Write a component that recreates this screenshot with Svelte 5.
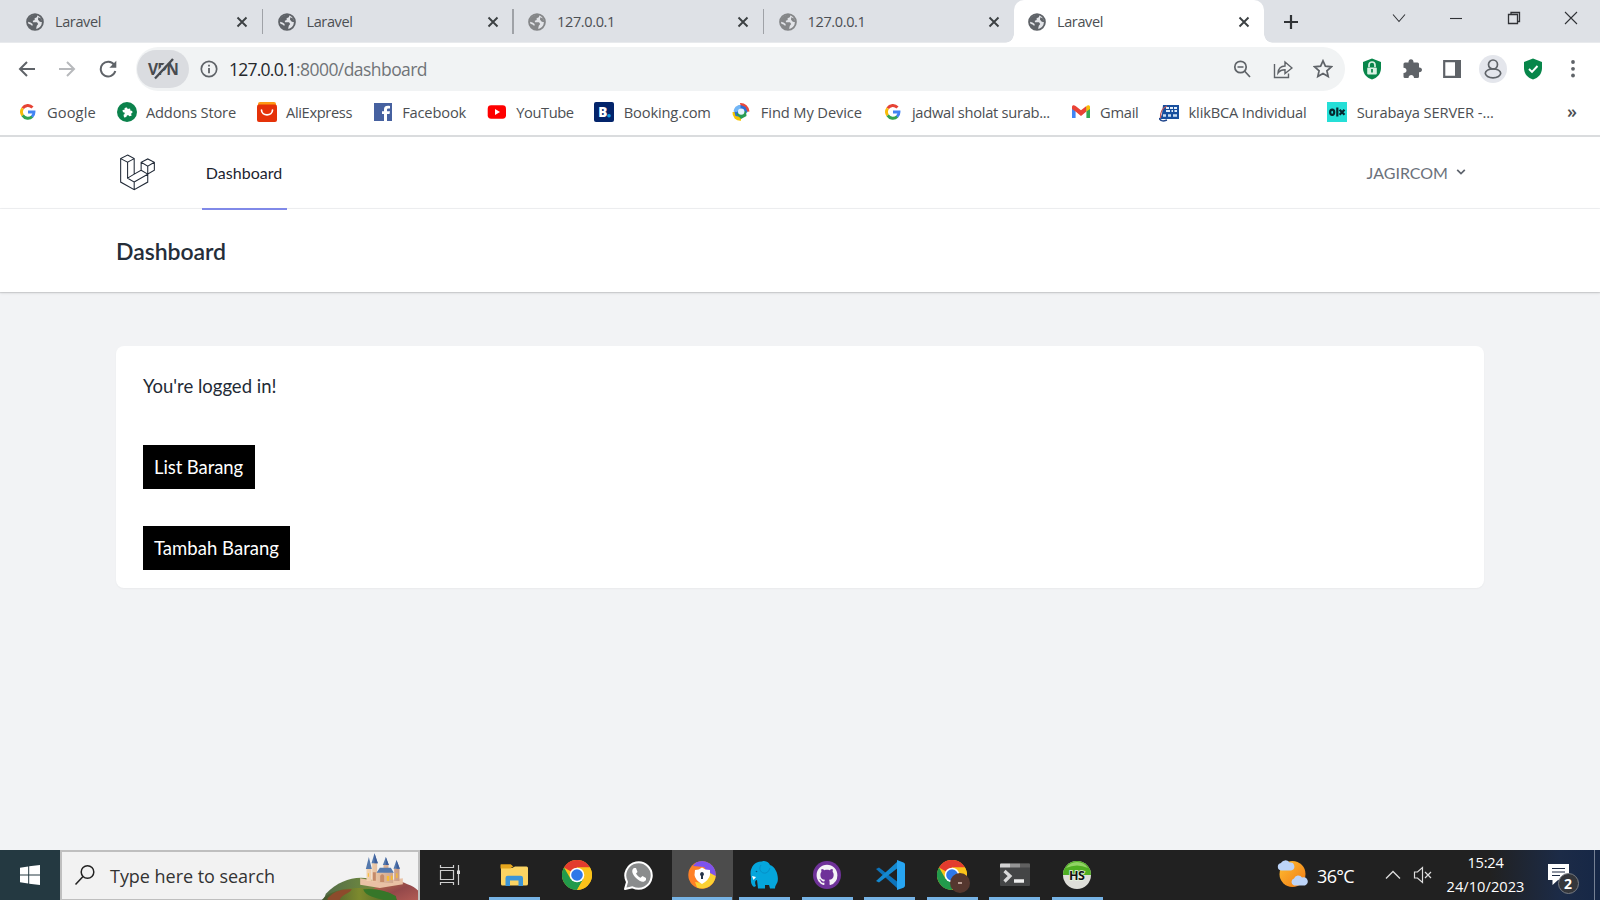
<script>
  const tabs = [
    { title: 'Laravel', w: 46 },
    { title: 'Laravel', w: 46 },
    { title: '127.0.0.1', w: 58, dim: true },
    { title: '127.0.0.1', w: 58, dim: true },
    { title: 'Laravel', w: 46, active: true }
  ];

  const bookmarks = [
    { icon: 'google', label: 'Google', w: 49 },
    { icon: 'addons', label: 'Addons Store', w: 90 },
    { icon: 'ali', label: 'AliExpress', w: 66 },
    { icon: 'facebook', label: 'Facebook', w: 64 },
    { icon: 'youtube', label: 'YouTube', w: 57.5 },
    { icon: 'booking', label: 'Booking.com', w: 87 },
    { icon: 'device', label: 'Find My Device', w: 101 },
    { icon: 'google', label: 'jadwal sholat surab...', w: 138 },
    { icon: 'gmail', label: 'Gmail', w: 38.5 },
    { icon: 'bca', label: 'klikBCA Individual', w: 118 },
    { icon: 'olx', label: 'Surabaya SERVER -...', w: 137 }
  ];

  const apps = [
    { icon: 'explorer', open: true },
    { icon: 'chrome' },
    { icon: 'whatsapp' },
    { icon: 'secure', open: true, current: true },
    { icon: 'mamp', open: true },
    { icon: 'github', open: true },
    { icon: 'vscode', open: true },
    { icon: 'chromeProfile', open: true },
    { icon: 'terminal', open: true },
    { icon: 'hs', open: true }
  ];

  // Adjusts tracking so that a label takes up the given width.
  function fit(node, width) {
    node.style.letterSpacing = '0px';
    const natural = node.getBoundingClientRect().width;
    node.style.letterSpacing = (width - natural) / node.textContent.length + 'px';
  }
</script>

{#snippet globe()}
  <svg class="globe" viewBox="0 0 18 18" width="18" height="18">
    <circle cx="9" cy="9" r="7.9" fill="#e2e4e8" stroke="currentColor" stroke-width="1.9" />
    <path d="M2 6.5C3.500 2.500 8 1 11.500 2.200L10.800 4.300 8.600 5.200 8.700 7 6.800 7.700 7 9.300H11L12.200 11 10.800 12.800 10 16.200C5.500 17.200 2 14 1.500 10.500L4.500 11.400 6.300 13.100 6.700 11 4.500 9.500 2 8.800Z" fill="currentColor" />
    <path d="M12.300 4.200L15.200 5.500 16.500 9.200 13.800 8.800 12 6.800Z" fill="currentColor" />
  </svg>
{/snippet}

{#snippet chromeArt()}
  <circle cx="15" cy="15" r="15" fill="#fbc21a" />
  <path d="M15 15L2 7.500A15 15 0 0 1 28 7.500H15Z" fill="#e33b2e" />
  <path d="M2 7.500A15 15 0 0 0 15 30L21.500 18.700 8.500 18.700Z" fill="#229a4b" />
  <path d="M15 7.500H28A15 15 0 0 1 15 30L21.500 18.700Z" fill="#fbc21a" />
  <circle cx="15" cy="15" r="7.300" fill="#fff" />
  <circle cx="15" cy="15" r="5.800" fill="#2f78e8" />
{/snippet}

{#snippet bookmarkIcon(name)}
  <svg viewBox="0 0 20 20" width="20" height="20">
    {#if name === 'google'}
      <g fill="none" stroke-width="2.900">
        <path d="M4.700 6.300A6.200 6.200 0 0 1 14.500 5.500" stroke="#e64335" />
        <path d="M4.700 13.400A6.200 6.200 0 0 1 4.700 6.300" stroke="#f8bb09" />
        <path d="M14.300 14.400A6.200 6.200 0 0 1 4.700 13.400" stroke="#34a350" />
        <path d="M10 10H16A6.200 6.200 0 0 1 14 14.600" stroke="#4284f3" />
      </g>
    {:else if name === 'addons'}
      <circle cx="10" cy="10" r="10" fill="#0b824c" />
      <path d="M6 7.200H8.200C7.600 5 11.600 4.700 11.200 7.200H13.700V9.600C16 9.300 16 12.400 13.700 12.200V14.700H11.300C11.500 12.800 8.300 12.800 8.500 14.700H6V12C8 12.100 8 9.400 6 9.600Z" fill="#fff" transform="rotate(-12 10 10)" />
    {:else if name === 'ali'}
      <path d="M1 2Q1 0 3 0H17Q19 0 19 2V6H1Z" fill="#ff9914" />
      <rect y="2.500" width="20" height="17.500" rx="2" fill="#e53209" />
      <path d="M4.500 8C4.500 14.500 15.500 14.500 15.500 8" fill="none" stroke="#fff" stroke-width="1.700" stroke-linecap="round" />
    {:else if name === 'facebook'}
      <rect x="1" y="1" width="18" height="18" fill="#4661a0" />
      <path d="M11 19V12H9V9.300H11V7.300C11 4.500 13 3.400 17 4V6.500C14.800 6.200 14 6.500 14 8V9.300H17L16.500 12H14V19Z" fill="#fff" />
    {:else if name === 'youtube'}
      <rect x=".7" y="3.300" width="18.300" height="13.400" rx="3.400" fill="#fe0000" />
      <path d="M8 7L13 10 8 13Z" fill="#fff" />
    {:else if name === 'booking'}
      <rect width="20" height="20" rx="2" fill="#03246b" />
      <text x="4.200" y="15" font-family="Open Sans, sans-serif" font-size="13.500" font-weight="800" fill="#fff">B</text>
      <circle cx="15" cy="13.700" r="1.800" fill="#16a0e8" />
    {:else if name === 'device'}
      <path d="M9 1A9 9 0 0 1 18.500 9.500L14 10A4.500 4.500 0 0 0 10 5.500Z" fill="#e8483b" />
      <path d="M10 18.800A8 8 0 0 1 1.500 10H6L10 14Z" fill="#f5c500" />
      <path d="M3.500 10A7 7 0 0 1 9.500 3L14.500 5 16.500 10 10 15 4.500 14Z" fill="#2c6fd6" />
      <path d="M2.500 9.500A8 8 0 0 1 9.500 2.700V7L6 10Z" fill="#72b6f6" />
      <path d="M5 11.500L10 17 15.500 14 15 9Z" fill="#2a9b53" />
      <circle cx="10.200" cy="9.600" r="3.200" fill="#e7f3fd" />
    {:else if name === 'gmail'}
      <path d="M2.800 5V16" stroke="#4285f4" stroke-width="3.600" />
      <path d="M17.200 5V16" stroke="#34a853" stroke-width="3.600" />
      <path d="M1 6.500V5C1 3 3 2.600 4.600 4L10 8.200 15.400 4V9.600L10 14 4.600 9.600 1 7Z" fill="#ea4335" />
      <path d="M15.400 4C17 2.600 19 3 19 5V7L15.400 9.600Z" fill="#fbbc04" />
    {:else if name === 'bca'}
      <path d="M4 3H20V17H1L3 12Z" fill="#174f9e" />
      <path d="M7 6H10M11 6H14M15 6H18M7 9H11M12.500 9H14M15.500 9H18" stroke="#e4effa" stroke-width="2" />
      <path d="M4 13.500H7M9 13.500H12M14 13.500H18" stroke="#cbdff2" stroke-width="2.400" />
      <path d="M8 4Q1 7 1.500 16" fill="none" stroke="#c25757" stroke-width="1.200" />
      <path d="M0 16C2 20 5 19 8 18" fill="none" stroke="#20468c" stroke-width="1.500" />
    {:else if name === 'olx'}
      <rect width="20" height="20" fill="#25dfd7" />
      <ellipse cx="5.200" cy="10.300" rx="2" ry="2.600" fill="none" stroke="#07282f" stroke-width="2.200" />
      <path d="M10.300 5.500V14.500M12.600 7.800L17.500 12.800M17.500 7.800L12.600 12.800" stroke="#07282f" stroke-width="2.200" />
    {/if}
  </svg>
{/snippet}

{#snippet appIcon(name)}
  <svg viewBox="0 0 30 30" width="30" height="30">
    {#if name === 'explorer'}
      <path d="M2 4.500H12L14.500 7H2Z" fill="#d99a13" />
      <path d="M2 8H13L16 6.500H27.500Q29 6.500 29 8V24Q29 25.500 27 25.500H3.500Q2 25.500 2 24Z" fill="#fcd462" />
      <path d="M1.500 4.500H11.500L13.500 6 12 8.500H1.500Z" fill="#e5a51d" />
      <path d="M6.500 26V18Q6.500 15.800 8.700 15.800H21.500Q24 15.800 24 18V26H19.500V20.500H11V26Z" fill="#3c95d8" />
    {:else if name === 'chrome'}
      {@render chromeArt()}
    {:else if name === 'whatsapp'}
      <path d="M1 29L3 22A13.200 13.200 0 1 1 8.500 27.300Z" fill="#8a8c8d" stroke="#fff" stroke-width="2" stroke-linejoin="round" />
      <path d="M10 8C7 10 8 14 12 18S20 23 22 20V18L18.500 16 16.500 17.700C14.500 17 13 15.300 12 13.500L13.500 12 12 8Z" fill="#fff" />
    {:else if name === 'secure'}
      <circle cx="15" cy="15" r="13.700" fill="#ff8127" />
      <path d="M9 2.500A13.700 13.700 0 0 1 28.500 17L22 15 17 7 6 6Z" fill="#7e53ed" />
      <path d="M28.700 16A13.700 13.700 0 0 1 10 27.500L8 22 16 23 23 13Z" fill="#fbd132" />
      <path d="M8 10Q12 10 15 7.500Q18 10 23 10V15Q22 20 15 24Q8 20 7.500 15Z" fill="#fff" />
      <path d="M15 12A2.200 2.200 0 0 1 16 16V19H14V16A2.200 2.200 0 0 1 15 12Z" fill="#253449" />
    {:else if name === 'mamp'}
      <path d="M2 17C0 9 5 1 13 1.500C17 0 20 3 21 5C27 7 30 16 28.500 22C27 25 26 26 26 28.500H21L20 25H16V28.500H9L8 20C6 20 5.500 23 7 26L5 27C1 24 2 20 2 17Z" fill="#05a6dc" />
      <path d="M12 5C9 9 12 14 17 13Q20 12 21 8" fill="none" stroke="#0590c8" stroke-width="1" />
      <path d="M3 16L7 17 4.500 20Z" fill="#fff" />
      <circle cx="7.500" cy="11.500" r=".8" fill="#07577f" />
    {:else if name === 'github'}
      <circle cx="15" cy="15" r="14" fill="#6f3299" />
      <path fill="#f5f3f7" transform="translate(4.600 4.800) scale(1.300)" d="M8 0C3.580 0 0 3.580 0 8c0 3.540 2.290 6.530 5.470 7.590.4.070.55-.17.55-.38 0-.19-.01-.82-.01-1.490-2.010.37-2.530-.49-2.690-.94-.09-.23-.48-.94-.82-1.130-.28-.15-.68-.52-.01-.53.63-.01 1.080.58 1.230.82.72 1.210 1.870.87 2.330.66.07-.52.28-.87.51-1.070-1.780-.2-3.640-.89-3.640-3.950 0-.87.31-1.590.82-2.150-.08-.2-.36-1.020.08-2.120 0 0 .67-.21 2.200.82.64-.18 1.320-.27 2-.27s1.360.09 2 .27c1.530-1.040 2.200-.82 2.200-.82.44 1.100.16 1.920.08 2.120.51.56.82 1.270.82 2.150 0 3.070-1.870 3.750-3.650 3.950.29.25.54.73.54 1.480 0 1.070-.01 1.930-.01 2.200 0 .21.15.46.55.38A8.010 8.010 0 0 0 16 8c0-4.420-3.580-8-8-8Z" />
    {:else if name === 'vscode'}
      <path d="M1 9L4 7.500 24 23V29L22 28Z" fill="#0d73ba" />
      <path d="M1 21L4 22.500 24 7V1L22 2Z" fill="#1489d0" />
      <path d="M22 0L28.500 2.500Q30 3 30 4.500V25.500Q30 27 28.500 27.700L22 30Z" fill="#27a5f2" />
    {:else if name === 'chromeProfile'}
      {@render chromeArt()}
    {:else if name === 'terminal'}
      <rect y="3.500" width="30" height="22.500" rx="1" fill="#444546" />
      <path d="M0 7.500V4.500Q0 3.500 1 3.500H10V7.500Z" fill="#d3d3d3" />
      <path d="M10 3.500H20V7.500H10Z" fill="#949494" />
      <path d="M20 3.500H29Q30 3.500 30 4.500V7.500H20Z" fill="#606060" />
      <path d="M4.500 11L10 16 4.500 21.500" fill="none" stroke="#d9d9d9" stroke-width="3.200" />
      <path d="M14 21H24" stroke="#eee" stroke-width="3.500" />
    {:else if name === 'hs'}
      <circle cx="15" cy="15" r="14" fill="#deded9" />
      <path d="M1 15A14 14 0 0 1 29 15Z" fill="#4faf22" />
      <path d="M4 8A13 13 0 0 1 26 8Q15 3 4 8Z" fill="#91d365" />
      <text x="7" y="19.500" font-family="Open Sans, sans-serif" font-size="12.500" font-weight="700" textLength="16" fill="#111" stroke="#e8f3e0" stroke-width="1.500" paint-order="stroke">HS</text>
    {/if}
  </svg>
{/snippet}

<div class="screen">
  <header class="tabstrip">
    <div class="tabs">
      {#each tabs as tab}
        <div class="tab" class:active={tab.active} class:dim={tab.dim}>
          {@render globe()}
          <span class="title"><span use:fit={tab.w}>{tab.title}</span></span>
          <svg class="x" viewBox="0 0 12 12" width="12" height="12"><path d="M1.500 1.500L10.500 10.500M10.500 1.500L1.500 10.500" stroke="#3c4043" stroke-width="1.900" /></svg>
        </div>
      {/each}
    </div>
    <svg class="plus" viewBox="0 0 16 16" width="16" height="16"><path d="M8 1V15M1 8H15" stroke="#303336" stroke-width="2.200" /></svg>
    <div class="window-controls">
      <svg viewBox="0 0 16 16" width="16" height="16"><path d="M2 4.500L8 11.500 14 4.500" /></svg>
      <svg viewBox="0 0 16 16" width="16" height="16"><path d="M2 8.500H14" /></svg>
      <svg viewBox="0 0 16 16" width="16" height="16"><path d="M2.500 4.500H11.500V13.500H2.500ZM5 4V2.500H13.500V11.500H12" stroke-width="1.300" /></svg>
      <svg viewBox="0 0 16 16" width="16" height="16"><path d="M2 2L14 14M14 2L2 14" /></svg>
    </div>
  </header>

  <div class="toolbar">
    <div class="nav-buttons">
      <svg viewBox="0 0 18 18" width="18" height="18"><path d="M17 9H2M9 2L2 9 9 16" /></svg>
      <svg class="disabled" viewBox="0 0 18 18" width="18" height="18"><path d="M1 9H16M9 2L16 9 9 16" /></svg>
      <svg viewBox="0 0 18 18" width="18" height="18"><path d="M15.200 4.800A7.400 7.400 0 1 0 16.300 11" /><path d="M17.300 .8V7.700H10.400Z" fill="#5f6368" stroke="none" /></svg>
    </div>
    <div class="omnibox">
      <div class="vpn">
        <span use:fit={30}>VPN</span>
        <svg viewBox="0 0 52 39" width="52" height="39"><path d="M16.500 27L34.500 7.500" stroke="#dadce0" stroke-width="2.500" /><path d="M18 28.500L36 9" stroke="#484b50" stroke-width="2.300" /></svg>
      </div>
      <svg class="info" viewBox="0 0 18 18" width="18" height="18"><circle cx="9" cy="9" r="7.700" fill="none" stroke="#5f6368" stroke-width="1.700" /><path d="M9 8V13.200M9 4.700V6.500" stroke="#5f6368" stroke-width="1.800" /></svg>
      <div class="url"><span class="host" use:fit={67}>127.0.0.1</span><span use:fit={131}>:8000/dashboard</span></div>
      <div class="omni-icons">
        <svg viewBox="0 0 20 20" width="20" height="20"><circle cx="8.500" cy="8" r="5.700" /><path d="M12.700 12.200L18 18M5.500 8H11.500" /></svg>
        <svg viewBox="0 0 20 20" width="20" height="20"><path d="M1.500 5V18.500H15.500V14.500M5 14C5.500 9 8 7 12 7V3L19 9 12 14.500V10.800C8.500 10.800 6.500 12 5 14Z" stroke-width="1.400" /></svg>
        <svg viewBox="0 0 20 20" width="20" height="20"><path d="M10 1.800L12.400 7.200 18.300 7.800 13.900 11.800 15.200 17.600 10 14.500 4.800 17.600 6.100 11.800 1.700 7.800 7.600 7.200Z" /></svg>
      </div>
    </div>
    <div class="extensions">
      <svg viewBox="0 0 24 24" width="24" height="24"><path d="M12 1.500L21 5V11C21 17 17 21 12 22.500C7 21 3 17 3 11V5Z" fill="#07864a" /><rect x="7.200" y="10.500" width="9.600" height="7" rx="1" fill="#d8f1e2" /><path d="M9 10V8A3 3 0 0 1 15 8V10" fill="none" stroke="#d8f1e2" stroke-width="1.700" /><path d="M12 12V15.500" stroke="#07864a" stroke-width="1.700" /></svg>
      <svg viewBox="0 0 24 24" width="24" height="24"><path d="M3.500 7Q3.500 5.500 5 5.500H8.500C8 1 14 1 13.500 5.500H17.500Q19 5.500 19 7V10.500C23 10.200 23 15.500 19 15.200V19.500Q19 21 17.500 21H14C14 17 8.500 17 8.500 21H5Q3.500 21 3.500 19.500V16C7.500 16 7.500 10.800 3.500 10.700Z" fill="#5f6368" /></svg>
      <svg viewBox="0 0 24 24" width="24" height="24"><path d="M4.200 4.200H19.800V19.800H4.200Z" fill="#fff" stroke="#5f6368" stroke-width="2.200" /><path d="M15 3H21V21H15Z" fill="#5f6368" /></svg>
      <div class="avatar"><svg viewBox="0 0 20 20" width="20" height="20"><circle cx="10" cy="5.500" r="4.500" /><ellipse cx="10" cy="14.300" rx="7.700" ry="4.500" /></svg></div>
      <svg viewBox="0 0 24 24" width="24" height="24"><path d="M12 1.500L21 5V11C21 17 17 21 12 22.500C7 21 3 17 3 11V5Z" fill="#07864a" /><path d="M8 12L11 15 16.500 9" fill="none" stroke="#fff" stroke-width="1.900" /></svg>
      <svg viewBox="0 0 24 24" width="24" height="24"><g fill="#5f6368"><circle cx="12" cy="5" r="1.900" /><circle cx="12" cy="11.800" r="1.900" /><circle cx="12" cy="18.500" r="1.900" /></g></svg>
    </div>
  </div>

  <nav class="bookmarks">
    {#each bookmarks as b}
      <div class="bookmark">
        {@render bookmarkIcon(b.icon)}
        <span class="label" style="width: {b.w}px"><span use:fit={b.w}>{b.label}</span></span>
      </div>
    {/each}
    <span class="more">»</span>
  </nav>

  <div class="page">
    <div class="app-nav">
      <div class="container">
        <svg class="logo" viewBox="88 72 110 112" width="37" height="37"><path d="M113 75L133 86V133L154 121V97L174 87 194 97V121L174 133V157L133 180 92 157V86ZM92 86L113 97 133 86M113 97V145L133 157V180M113 145L133 133M154 121L174 133 133 157M154 97L174 109 194 97M174 109V133" /></svg>
        <a class="nav-link" href="#dashboard"><span use:fit={76.500}>Dashboard</span></a>
        <div class="user"><span use:fit={81.500}>JAGIRCOM</span><svg viewBox="0 0 10 8" width="10" height="8"><path d="M1.200 1.800L5 5.600 8.800 1.800" /></svg></div>
      </div>
    </div>
    <div class="page-header"><h2><span use:fit={110}>Dashboard</span></h2></div>
    <main>
      <section class="card">
        <p><span use:fit={133.500}>You're logged in!</span></p>
        <button class="list"><span use:fit={89}>List Barang</span></button>
        <button class="add"><span use:fit={125}>Tambah Barang</span></button>
      </section>
    </main>
  </div>

  <footer class="taskbar">
    <div class="start"><svg viewBox="0 0 20 20" width="20" height="20"><path d="M0 2.700L8.200 1.500V9.500H0ZM9.200 1.300L20 0V9.500H9.200ZM0 10.500H8.200V18.500L0 17.300ZM9.200 10.500H20V20L9.200 18.700Z" fill="#fff" /></svg></div>
    <div class="search">
      <svg class="lens" viewBox="0 0 22 22" width="22" height="22"><circle cx="13.500" cy="8" r="6.300" /><path d="M9 12.500L1.500 20.500" /></svg>
      <span class="label"><span use:fit={165}>Type here to search</span></span>
      <svg class="castle" viewBox="966 33 290 144" width="97" height="48">
        <defs>
          <linearGradient id="hillA" x1="0" x2="1"><stop offset="0" stop-color="#526b48" /><stop offset=".6" stop-color="#6b8540" /><stop offset="1" stop-color="#7d8046" /></linearGradient>
          <linearGradient id="hillB" x1="0" x2="1" y2="1"><stop offset="0" stop-color="#bc7149" /><stop offset=".5" stop-color="#93484a" /><stop offset="1" stop-color="#b45c55" /></linearGradient>
          <linearGradient id="hillC"><stop offset="0" stop-color="#40532f" /><stop offset=".5" stop-color="#7d8a2e" /><stop offset="1" stop-color="#475f25" /></linearGradient>
          <linearGradient id="wall"><stop offset="0" stop-color="#f4d4b1" /><stop offset="1" stop-color="#c99b85" /></linearGradient>
        </defs>
        <path d="M980 158C1020 119 1060 105 1110 112L1170 150 1100 180H972Z" fill="url(#hillA)" />
        <path d="M1120 145C1160 120 1190 112 1225 130Q1250 139 1260 153V180H1120Z" fill="url(#hillB)" />
        <path d="M966 180C990 140 1090 130 1165 154Q1190 164 1194 180Z" fill="url(#hillC)" />
        <path d="M985 172Q1010 142 1058 145C1050 160 1028 158 1020 180H986Z" fill="#8d4b2c" />
        <path d="M1092 145Q1145 140 1190 165L1193 180H1165C1140 172 1101 170 1092 145Z" fill="#367629" />
        <path d="M1083 112L1140 122 1211 112V130L1142 141 1083 131Z" fill="#e9c1a5" />
        <path d="M1102 83H1117V120H1102ZM1119 66H1134V123H1119ZM1134 94H1182V126H1134ZM1153 71H1168V96H1153ZM1185 82H1201V120H1185Z" fill="url(#wall)" />
        <path d="M1100 84L1109 48 1118 84ZM1117 67L1126 37 1136 67ZM1151 72L1160 48 1169 72ZM1183 83L1192 57 1202 83ZM1132 95L1142 80H1175L1184 95Z" fill="#5579ad" />
        <path d="M1126 37L1136 67H1126ZM1160 48L1169 72H1160ZM1192 57L1202 83H1192Z" fill="#3d5e9b" />
        <path d="M1163 105H1170V119H1163ZM1175 104H1180V117H1175ZM1191 97H1195V111H1191ZM1106 97H1109V107H1106Z" fill="#f8bd2f" />
        <path d="M1143 104Q1150 96 1155 104V123H1143ZM1121 94H1130V119H1121Z" fill="#c68b69" />
      </svg>
    </div>
    <div class="taskview"><svg viewBox="0 0 22 20" width="22" height="20"><path d="M1.500 0V2.500H14.500V0M1.500 5.500H14.500V14.500H1.500ZM1.500 20V17.500H14.500V20M19.500 0V20" /><path d="M18 5.500H21V9H18Z" fill="#ddd" stroke="none" /></svg></div>
    <div class="apps">
      {#each apps as app}
        <div class="app" class:open={app.open} class:current={app.current}>
          {@render appIcon(app.icon)}
          {#if app.icon === 'chromeProfile'}<i class="profile"></i>{/if}
        </div>
      {/each}
    </div>
    <div class="tray">
      <svg class="weather" viewBox="0 0 32 30" width="32" height="30">
        <defs><linearGradient id="sun" x1="0" y1="0" x2="1" y2="1"><stop offset="0" stop-color="#ffbf32" /><stop offset="1" stop-color="#f07914" /></linearGradient></defs>
        <circle cx="15.500" cy="15" r="13" fill="url(#sun)" />
        <path d="M4 11.500A3.800 3.800 0 0 1 4 4A5 5 0 0 1 12.500 3.500A4 4 0 0 1 14 11.500ZM17 26.500A3.700 3.700 0 0 1 17 19.500A4.500 4.500 0 0 1 25 18.500A4 4 0 0 1 28 26.500Z" fill="#bcd4f8" />
      </svg>
      <span class="temp"><span use:fit={37}>36°C</span></span>
      <svg class="up" viewBox="0 0 16 10" width="16" height="10"><path d="M1 8.500L8 1.500 15 8.500" /></svg>
      <svg class="sound" viewBox="0 0 20 18" width="20" height="18"><path d="M1.500 6H4.500L9.500 1.500V16.500L4.500 12H1.500ZM12 6L18 12M18 6L12 12" /></svg>
      <div class="clock"><div><span use:fit={36}>15:24</span></div><div><span use:fit={78}>24/10/2023</span></div></div>
      <div class="notify">
        <svg viewBox="0 0 22 22" width="22" height="22"><path d="M0 0H21V16H10L4.500 21V16H0Z" fill="#fff" /><path d="M4 4.500H17M4 8H17M4 11.500H12" stroke="#1c2942" stroke-width="1.200" /></svg>
        <b class="badge">2</b>
      </div>
      <i class="peek"></i>
    </div>
  </footer>
</div>

<style>
  :global(body) { margin: 0; overflow: hidden; }
  .screen { width: 1600px; height: 900px; display: flex; flex-direction: column; overflow: hidden; background: #fff; font-family: 'Open Sans', 'Noto Sans', sans-serif; color: #4c4f53; }
  svg { flex: none; display: block; }
  span { white-space: nowrap; }

  .tabstrip { height: 43px; flex: none; background: #dee1e6; box-shadow: inset 0 -1px #e8eaed; display: flex; align-items: center; box-sizing: border-box; }
  .tabs { display: flex; width: 1264px; height: 43px; padding-left: 11.500px; box-sizing: border-box; }
  .tab { position: relative; width: 250.500px; height: 43px; flex: none; box-sizing: border-box; display: flex; align-items: center; padding: 0 14px 0 14.500px; font-size: 14.500px; }
  .tab:nth-child(n + 2) { padding-left: 15.500px; }
  .tab:nth-child(5) { padding-left: 14.500px; }
  .tab .title { padding-bottom: 1px; }
  .tab:not(.active):not(:nth-child(4))::after { content: ''; position: absolute; right: -1px; top: 9px; width: 1.500px; height: 25px; background: #9fa2a7; }
  .globe { color: #5f6368; }
  .dim .globe { color: #858789; }
  .title { flex: 1; padding-left: 11px; }
  .active { background: #fff; border-radius: 10px 10px 0 0; }
  .active::before, .active::after { content: ''; position: absolute; bottom: 0; width: 9px; height: 9px; }
  .active::before { left: -9px; background: radial-gradient(circle at 0 0, transparent 8.500px, #fff 9px); }
  .active::after { right: -9px; background: radial-gradient(circle at 100% 0, transparent 8.500px, #fff 9px); }
  .plus { margin-left: 19px; }
  .window-controls { margin: 0 21px 7px auto; display: flex; gap: 41.300px; }
  .window-controls svg { fill: none; stroke: #303236; stroke-width: 1.100; }

  .toolbar { height: 49px; flex: none; display: flex; align-items: center; padding-top: 3px; box-sizing: border-box; }
  .nav-buttons { display: flex; gap: 22.300px; width: 136px; padding-left: 18px; box-sizing: border-box; }
  .nav-buttons svg { fill: none; stroke: #5f6368; stroke-width: 2; }
  .nav-buttons .disabled { stroke: #b7b9bc; }
  .omnibox { width: 1209px; height: 44px; border-radius: 22px; background: #f1f3f4; display: flex; align-items: center; }
  .vpn { position: relative; width: 52px; height: 38px; margin-left: 1px; border-radius: 19px; background: #dadce0; display: grid; place-items: center; font-size: 15.500px; font-weight: 700; color: #484b50; }
  .vpn svg { position: absolute; inset: 0; }
  .info { margin-left: 11px; }
  .url { margin-left: 11px; font-size: 17.500px; color: #707478; line-height: 24px; margin-bottom: 1px; }
  .host { color: #25282c; }
  .omni-icons { margin-left: auto; margin-right: 12px; display: flex; gap: 20.500px; }
  .omni-icons svg, .avatar svg { fill: none; stroke: #5f6368; stroke-width: 1.700; }
  .extensions { display: flex; align-items: center; gap: 16.200px; margin-left: 15px; }
  .avatar { width: 28px; height: 28px; margin: 0 -2px; border-radius: 50%; background: #e4e6ec; display: grid; place-items: center; }

  .bookmarks { height: 45px; flex: none; box-sizing: border-box; padding: 0 23px 3px 17.500px; border-bottom: 2px solid #dadcde; display: flex; align-items: center; gap: 20.700px; font-size: 14.700px; }
  .bookmark { display: flex; align-items: center; gap: 9.400px; }
  .bookmark .label { display: block; }
  .more { margin-left: auto; font-size: 18px; font-weight: 600; margin-bottom: 3px; }

  .page { height: 713px; flex: none; background: #f2f3f5; font-family: Lato, sans-serif; }
  .app-nav { height: 72px; box-sizing: border-box; background: #fff; border-bottom: 1px solid #f0f1f3; }
  .container { margin: 0 116px; display: flex; height: 73px; align-items: center; }
  .logo { margin-left: 3px; margin-bottom: 2px; fill: none; stroke: #222b38; stroke-width: 3.200; }
  .nav-link { align-self: stretch; box-sizing: border-box; margin-left: 45.500px; width: 85px; border-bottom: 2px solid #8089e8; padding-bottom: 1px; display: grid; place-items: center; font-size: 16px; color: #1c2430; text-decoration: none; }
  .user { margin: 0 18px 3px auto; display: flex; align-items: center; gap: 8px; font-size: 16px; color: #6b717b; }
  .user svg { fill: none; stroke: #5e646d; stroke-width: 1.700; }
  .page-header { height: 83px; background: #fff; box-shadow: 0 1px 3px #0000001a, 0 1px 1px #0000001a; padding: 0 116px; display: flex; align-items: center; }
  h2 { margin: 0; font-size: 23px; line-height: 28px; font-weight: 600; color: #252e39; }
  main { padding: 54px 116px; }
  .card { height: 242px; box-sizing: border-box; padding: 27px; background: #fff; border-radius: 8px; box-shadow: 0 1px 2px #0000000a; display: flex; flex-direction: column; align-items: flex-start; font-size: 18.500px; color: #222a35; }
  p { margin: 0; line-height: 27px; height: 26px; }
  button { border: 0; padding: 0 0 1px 11px; height: 44px; background: #000; color: #fff; font: inherit; text-align: left; flex: none; }
  .list { width: 112px; margin-top: 46px; }
  .add { width: 147px; margin-top: 37px; }

  .taskbar { height: 50px; flex: none; display: flex; background: linear-gradient(90deg, #212121 0 1490px, #1c2b47 1560px, #162746); color: #fff; }
  .start { width: 60px; height: 50px; background: #243941; display: grid; place-items: center; }
  .search { width: 360px; height: 50px; box-sizing: border-box; border: 2px solid #bfbfbf; border-bottom-width: 1px; background: #f2f2f2; display: flex; align-items: center; color: #333; font-size: 18px; }
  .lens { margin-left: 12px; margin-bottom: 2px; fill: none; stroke: #222; stroke-width: 1.500; }
  .search .label { margin-left: 14px; }
  .castle { margin-left: auto; }
  .taskview { width: 63px; padding-left: 19px; box-sizing: border-box; display: flex; align-items: center; }
  .taskview svg { fill: none; stroke: #cfcfcf; stroke-width: 1.200; }
  .apps { display: flex; }
  .app { width: 62.550px; height: 50px; display: grid; place-items: center; position: relative; }
  .app.current { background: linear-gradient(90deg, transparent 1px, #4c4c4c 1px 62px, transparent 62px); }
  .app.open::after { content: ''; position: absolute; left: 6px; right: 5.500px; bottom: 0; height: 3px; background: #76b3e5; }
  .app.current::after { left: 1px; right: 1px; }
  .profile { position: absolute; left: 29px; top: 23px; width: 20px; height: 20px; border-radius: 50%; background: radial-gradient(ellipse 2px 1.500px at center, #b89c92 90%, #55372f); }
  .tray { margin-left: auto; width: 323px; display: flex; align-items: center; }
  .weather { margin-bottom: 2px; }
  .temp { width: 37px; margin-left: 8px; font-size: 18px; padding-top: 1px; }
  .up { margin-left: 31px; fill: none; stroke: #ddd; stroke-width: 1.300; }
  .sound { margin-left: 12px; fill: none; stroke: #ddd; stroke-width: 1.200; }
  .clock { margin-left: 13px; width: 79px; text-align: center; font-size: 14.600px; line-height: 23.500px; padding-bottom: 1px; }
  .notify { position: relative; margin-left: 22.500px; }
  .badge { position: absolute; left: 10px; top: 9px; width: 19px; height: 19px; border-radius: 50%; background: #34363b; border: 1px solid #777b82; font-size: 14px; line-height: 19px; text-align: center; }
  .peek { width: 1px; height: 50px; margin-left: auto; margin-right: 5px; background: #758093; }
</style>
